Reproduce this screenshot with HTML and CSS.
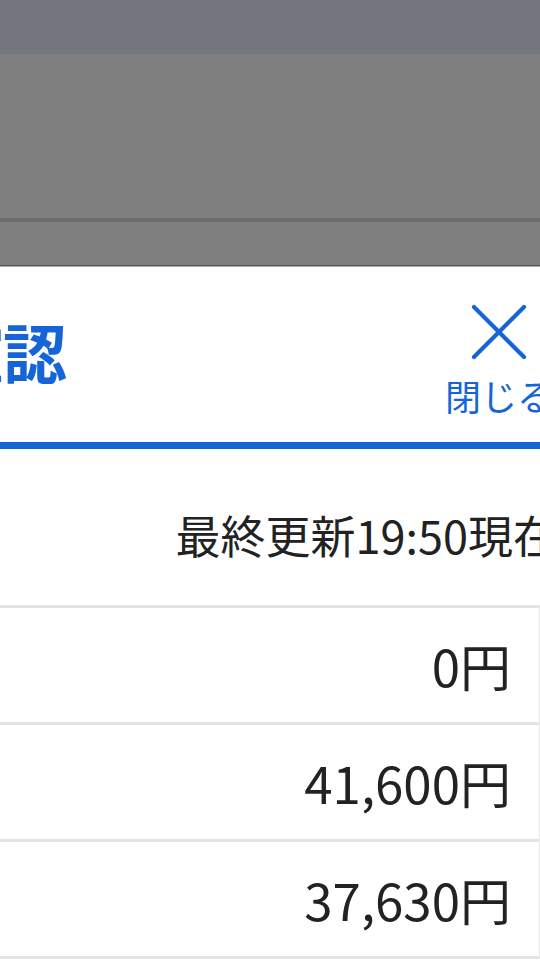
FILE: index.html
```html
<!DOCTYPE html>
<html lang="ja">
<head>
	<meta charset="utf-8"/>
	<title>確認</title>
	<link rel="stylesheet" href="styles.css">
</head>
<body>
	<div class="statusbar"></div>
	<div class="backdrop">
		<div class="page-bar"></div>
	</div>
	<div class="sheet">
		<div class="sheet-head">
			<h1 class="title">確認</h1>
			<div class="close">
				<svg class="close-icon" width="56" height="56" viewBox="0 0 56 56">
					<path d="M3 3 L53 53 M53 3 L3 53" stroke="#1565d8" stroke-width="4.2" stroke-linecap="round" fill="none"/>
				</svg>
				<span class="close-label">閉じる</span>
			</div>
		</div>
		<div class="updated">最終更新19:50現在</div>
		<div class="amounts">
			<div class="row">0円</div>
			<div class="row">41,600円</div>
			<div class="row">37,630円</div>
		</div>
	</div>
</body>
</html>
```

FILE: styles.css
```css
html, body {
	margin: 0;
	padding: 0;
}
body {
	width: 540px;
	height: 960px;
	overflow: hidden;
	background: #ffffff;
	font-family: "Noto Sans CJK JP", "Noto Sans", sans-serif;
	color: #222222;
}
.statusbar {
	height: 54px;
	background: #74777f;
}
.backdrop {
	height: 211px;
	background: #7f7f7f;
	border-bottom: 1px solid #555555;
}
.page-bar {
	height: 164px;
	border-bottom: 4px solid #6d6d6d;
}
.sheet {
	width: 640px;
	margin-left: -61px;
	border-top: 1px solid #b0b0b0;
	background: #ffffff;
}
.sheet-head {
	height: 175px;
	display: flex;
	justify-content: space-between;
	align-items: center;
	padding-right: 26px;
	border-bottom: 7px solid #1565d8;
}
.title {
	margin: 0 0 8px 0;
	font-size: 64px;
	font-weight: 700;
	line-height: 1.2;
	color: #1565d8;
}
.close {
	width: 108px;
	display: flex;
	flex-direction: column;
	align-items: center;
	gap: 14px;
	margin-top: 12px;
}
.close-icon {
	display: block;
}
.close-label {
	font-size: 36px;
	line-height: 1.2;
	color: #1565d8;
	white-space: nowrap;
}
.updated {
	padding: 59px 21px 43px 0;
	font-size: 45px;
	line-height: 1.2;
	text-align: right;
	white-space: nowrap;
}
.amounts {
	width: 600px;
	border-top: 3px solid #e3e3e3;
	border-right: 1px solid #e6e6e6;
}
.row {
	height: 114px;
	display: flex;
	align-items: center;
	justify-content: flex-end;
	padding-right: 28px;
	font-size: 51px;
	border-bottom: 3px solid #e3e3e3;
}
```
